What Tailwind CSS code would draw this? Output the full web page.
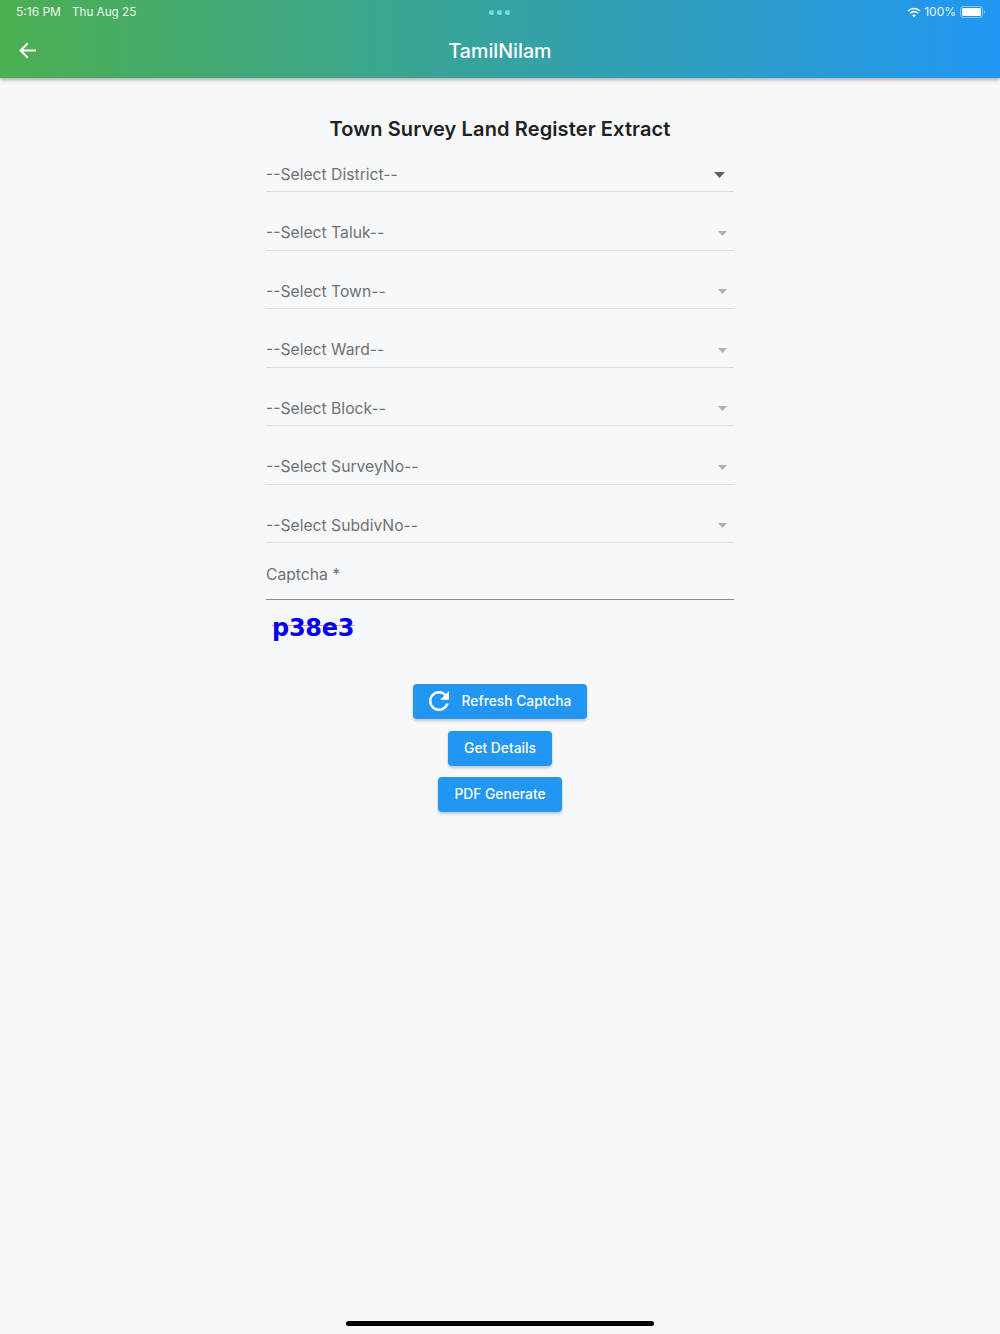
<!DOCTYPE html>
<html lang="en">
<head>
  <meta charset="UTF-8" />
  <title>TamilNilam</title>
  <script src="https://cdn.jsdelivr.net/npm/@tailwindcss/browser@4"></script>
</head>
<body class="font-['Inter',sans-serif] bg-[#f7f8fa]">
  <div class="relative w-[1000px] h-[1334px] overflow-hidden bg-[#f7f8fa]">
    <!-- App bar -->
    <header class="h-[78px] bg-linear-to-r/srgb from-[#4caf50] to-[#2196f3] text-white shadow-[0_2px_4px_rgba(0,0,0,0.3)]">
      <div class="relative flex items-center justify-between h-6 pl-4 pr-[14px] text-[12px] leading-6 text-white/90">
        <div class="flex gap-[11px]"><span>5:16 PM</span><span class="text-[11.7px]">Thu Aug 25</span></div>
        <div class="absolute left-[489px] top-[10px] flex gap-[3px]">
          <span class="size-[5px] rounded-full bg-[#6fdcd8]"></span>
          <span class="size-[5px] rounded-full bg-[#6fdcd8]"></span>
          <span class="size-[5px] rounded-full bg-[#6fdcd8]"></span>
        </div>
        <div class="flex items-center gap-[3px]">
          <svg width="14" height="11" viewBox="0 0 14 11" fill="none" stroke="white" stroke-width="1.6">
            <path d="M1 4 A8.5 8.5 0 0 1 13 4" />
            <path d="M3.2 6.2 A5.4 5.4 0 0 1 10.8 6.2" />
            <path d="M7 10.5 L5.1 8.3 A2.8 2.8 0 0 1 8.9 8.3 Z" fill="white" stroke="none" />
          </svg>
          <span>100%</span>
          <svg width="26" height="12" viewBox="0 0 26 12" class="ml-[1px]">
            <rect x="0.5" y="0.5" width="22" height="11" rx="3" fill="none" stroke="white" stroke-opacity="0.45" />
            <rect x="2" y="2" width="19" height="8" rx="1.5" fill="white" />
            <path d="M24 4.2 A2 2 0 0 1 24 7.8 Z" fill="white" fill-opacity="0.5" />
          </svg>
        </div>
      </div>
      <div class="relative flex items-center justify-center h-[54px]">
        <svg class="absolute left-[19px] top-[18px]" width="17" height="17" viewBox="0 0 17 17" fill="none" stroke="white" stroke-width="2">
          <path d="M17 8.5 H2 M8.8 1.2 L1.6 8.5 L8.8 15.8" />
        </svg>
        <h1 class="text-[19.6px] font-medium leading-6">TamilNilam</h1>
      </div>
    </header>

    <!-- Form -->
    <main class="w-[468px] mx-auto pt-[39px]">
      <h2 class="text-[20px] leading-6 font-semibold tracking-[0.12px] text-[#212121] text-center">Town Survey Land Register Extract</h2>

      <div class="mt-[1px] flex items-center justify-between h-[50px] pt-4 border-b border-[#dcdee0] text-[15.7px] text-[#6f7174]">
        <span>--Select District--</span>
        <svg class="mr-[9px]" width="11" height="6" viewBox="0 0 11 6"><path d="M0 0 H11 L5.5 6 Z" fill="#616161" /></svg>
      </div>
      <div class="mt-[8.5px] flex items-center justify-between h-[50px] pt-4 border-b border-[#dcdee0] text-[15.7px] text-[#6f7174]">
        <span>--Select Taluk--</span>
        <svg class="mr-[7px]" width="9" height="5" viewBox="0 0 9 5"><path d="M0 0 H9 L4.5 5 Z" fill="#b0b0b0" /></svg>
      </div>
      <div class="mt-[8.5px] flex items-center justify-between h-[50px] pt-4 border-b border-[#dcdee0] text-[15.7px] text-[#6f7174]">
        <span>--Select Town--</span>
        <svg class="mr-[7px]" width="9" height="5" viewBox="0 0 9 5"><path d="M0 0 H9 L4.5 5 Z" fill="#b0b0b0" /></svg>
      </div>
      <div class="mt-[8.5px] flex items-center justify-between h-[50px] pt-4 border-b border-[#dcdee0] text-[15.7px] text-[#6f7174]">
        <span>--Select Ward--</span>
        <svg class="mr-[7px]" width="9" height="5" viewBox="0 0 9 5"><path d="M0 0 H9 L4.5 5 Z" fill="#b0b0b0" /></svg>
      </div>
      <div class="mt-[8.5px] flex items-center justify-between h-[50px] pt-4 border-b border-[#dcdee0] text-[15.7px] text-[#6f7174]">
        <span>--Select Block--</span>
        <svg class="mr-[7px]" width="9" height="5" viewBox="0 0 9 5"><path d="M0 0 H9 L4.5 5 Z" fill="#b0b0b0" /></svg>
      </div>
      <div class="mt-[8.5px] flex items-center justify-between h-[50px] pt-4 border-b border-[#dcdee0] text-[15.7px] text-[#6f7174]">
        <span>--Select SurveyNo--</span>
        <svg class="mr-[7px]" width="9" height="5" viewBox="0 0 9 5"><path d="M0 0 H9 L4.5 5 Z" fill="#b0b0b0" /></svg>
      </div>
      <div class="mt-[8.5px] flex items-center justify-between h-[50px] pt-4 border-b border-[#dcdee0] text-[15.7px] text-[#6f7174]">
        <span>--Select SubdivNo--</span>
        <svg class="mr-[7px]" width="9" height="5" viewBox="0 0 9 5"><path d="M0 0 H9 L4.5 5 Z" fill="#b0b0b0" /></svg>
      </div>

      <div class="flex items-center h-[57px] pt-2 border-b border-[#8a8c8e] text-[15.7px] text-[#6f7174]">Captcha *</div>

      <div class="relative mt-[8px] ml-[6px] h-[40px] w-[82px]">
        <span class="absolute left-0 top-[17px] w-[82px] h-px bg-[#ff8a8a]"></span>
        <span class="relative block font-['DejaVu_Sans',sans-serif] font-bold text-[24px] leading-[40px] text-[#0000f0] tracking-[-0.3px]">p38e3</span>
      </div>

      <div class="mt-[36px] flex flex-col items-center gap-[11.5px]">
        <button class="flex items-center h-[35px] px-4 pb-[1px] rounded-[4px] bg-[#2196f3] text-white text-[13.8px] font-medium shadow-[0_2px_3px_rgba(0,0,0,0.2)]">
          <svg class="mr-[13px]" width="20" height="20" viewBox="4 4 16 16">
            <path fill="white" d="M17.65 6.35C16.2 4.9 14.21 4 12 4c-4.42 0-7.99 3.58-7.99 8s3.57 8 7.99 8c3.73 0 6.84-2.55 7.73-6h-2.08c-.82 2.33-3.04 4-5.65 4-3.31 0-6-2.69-6-6s2.69-6 6-6c1.66 0 3.14.69 4.22 1.78L13 11h7V4l-2.35 2.35z" />
          </svg>
          Refresh Captcha
        </button>
        <button class="flex items-center h-[35px] px-4 rounded-[4px] bg-[#2196f3] text-white text-[13.8px] font-medium shadow-[0_2px_3px_rgba(0,0,0,0.2)]">Get Details</button>
        <button class="flex items-center h-[35px] px-4 rounded-[4px] bg-[#2196f3] text-white text-[13.8px] font-medium shadow-[0_2px_3px_rgba(0,0,0,0.2)]">PDF Generate</button>
      </div>
    </main>

    <!-- Home indicator -->
    <div class="absolute left-[346px] top-[1321px] w-[308px] h-[5px] rounded-full bg-black"></div>
  </div>
</body>
</html>
